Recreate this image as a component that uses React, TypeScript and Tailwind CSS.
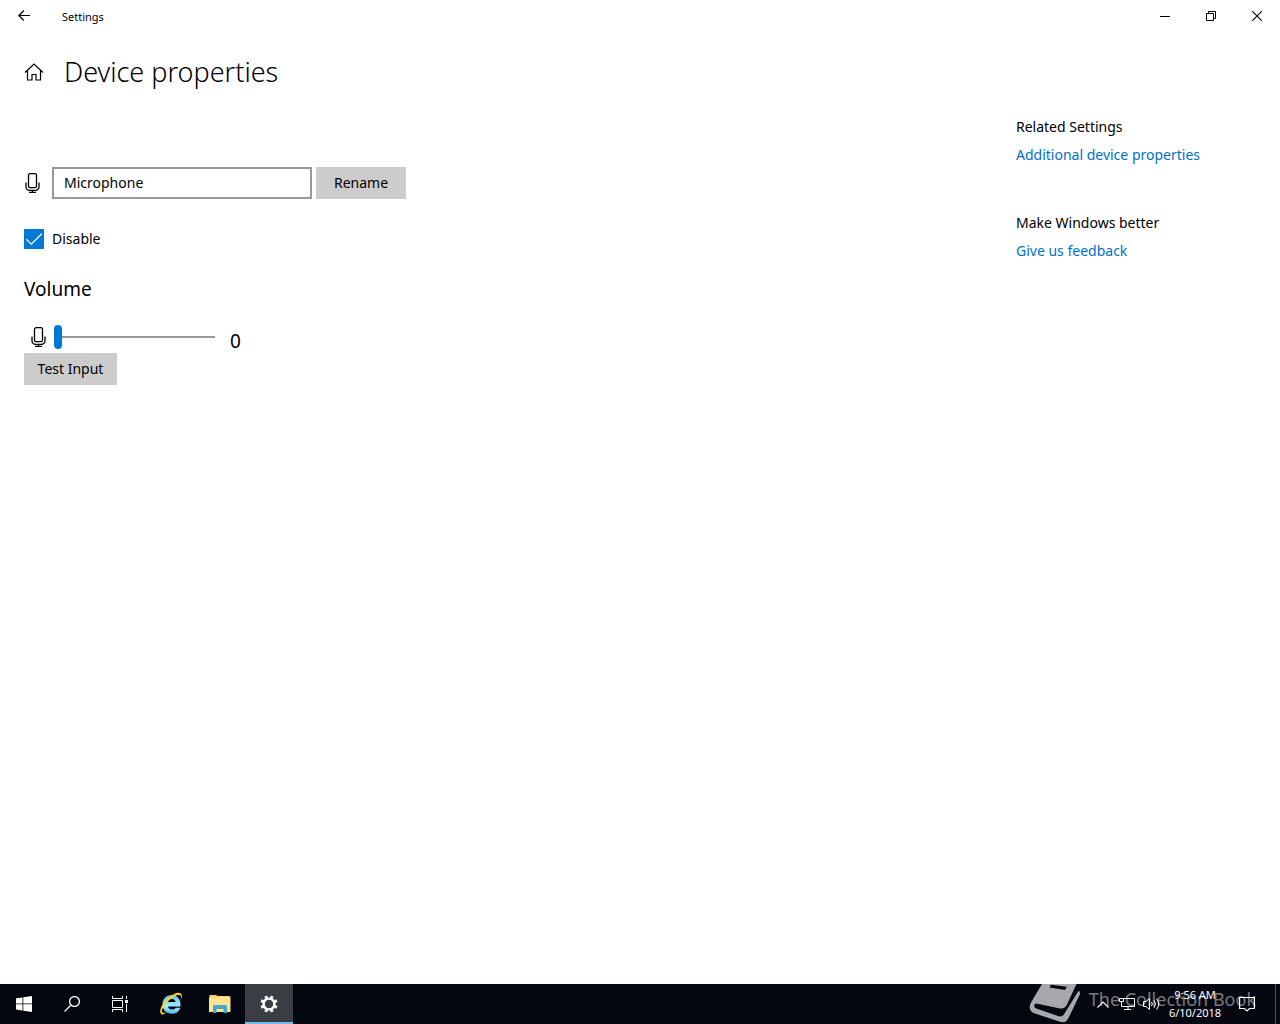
import { useState } from 'react';

function MicIcon() {
  return (
    <svg className="h-5 w-4 shrink-0" viewBox="0 0 16 20" fill="none" stroke="currentColor" strokeWidth="1.3">
      <rect x="4.5" y="0.7" width="8" height="14" rx="1.6" />
      <path d="M2 9.5v4.2a3.6 3.6 0 0 0 3.6 3.6h5.8a3.6 3.6 0 0 0 3.6-3.6V9.5M8.5 17.3v2M5 19.3h7" />
    </svg>
  );
}

function TitleBar() {
  return (
    <header className="flex h-8 items-center text-black">
      <button aria-label="Back" className="flex h-8 w-12 items-center justify-center">
        <svg className="h-3 w-3" viewBox="0 0 12 12" fill="none" stroke="currentColor" strokeWidth="1.2">
          <path d="M12 5.5H.8M5.8.5l-5 5 5 5" />
        </svg>
      </button>
      <span className="ml-3.5 flex-1 pt-0.5 text-[11px]">Settings</span>
      <button aria-label="Minimize" className="flex h-8 w-[46px] items-center justify-center">
        <svg className="h-2.5 w-2.5" viewBox="0 0 10 10" stroke="currentColor">
          <path d="M0 5.5h10" />
        </svg>
      </button>
      <button aria-label="Restore" className="flex h-8 w-[46px] items-center justify-center">
        <svg className="h-2.5 w-2.5" viewBox="0 0 10 10" fill="none" stroke="currentColor">
          <path d="M.5 2.5h7v7h-7zM2.5 2.5v-2h7v7h-2" />
        </svg>
      </button>
      <button aria-label="Close" className="flex h-8 w-[46px] items-center justify-center">
        <svg className="h-2.5 w-2.5" viewBox="0 0 10 10" stroke="currentColor" strokeWidth="1.1">
          <path d="M.2.2l9.6 9.6M9.8.2L.2 9.8" />
        </svg>
      </button>
    </header>
  );
}

function DeviceForm() {
  const [name, setName] = useState('Microphone');
  const [disabled, setDisabled] = useState(true);
  const [volume, setVolume] = useState(0);

  return (
    <section className="flex flex-col items-start pt-[55px]">
      <div className="flex items-center">
        <label htmlFor="device-name" aria-label="Device name" className="mr-3">
          <MicIcon />
        </label>
        <input
          id="device-name"
          type="text"
          value={name}
          onChange={(e) => setName(e.target.value)}
          className="mr-1 h-8 w-[260px] border-2 border-[#999] bg-white px-2.5 pb-0.5 text-sm outline-none"
        />
        <button className="h-8 w-[90px] bg-[#ccc] text-sm">Rename</button>
      </div>

      <label className="mt-[30px] flex items-center gap-2 text-sm">
        <span className="grid h-5 w-5">
          <input
            type="checkbox"
            checked={disabled}
            onChange={(e) => setDisabled(e.target.checked)}
            className="col-start-1 row-start-1 h-5 w-5 appearance-none border-2 border-[#333] checked:border-[#0078d7] checked:bg-[#0078d7]"
          />
          {disabled && (
            <svg
              className="pointer-events-none col-start-1 row-start-1 h-5 w-5"
              viewBox="0 0 20 20"
              fill="none"
              stroke="#fff"
              strokeWidth="1.3"
            >
              <path d="M2.3 10.2l5 5L17.8 4.7" />
            </svg>
          )}
        </span>
        Disable
      </label>

      <h2 className="mt-[26px] text-[19px] leading-7">Volume</h2>

      <div className="mt-5 flex h-[30px] items-start">
        <label htmlFor="volume" aria-label="Volume" className="mr-2 ml-1.5 pt-1">
          <MicIcon />
        </label>
        <input
          id="volume"
          type="range"
          min={0}
          max={100}
          value={volume}
          onChange={(e) => setVolume(Number(e.target.value))}
          className="mt-0.5 h-6 w-[161px] appearance-none bg-transparent [&::-webkit-slider-runnable-track]:h-0.5 [&::-webkit-slider-runnable-track]:bg-[#999] [&::-webkit-slider-thumb]:-mt-[11px] [&::-webkit-slider-thumb]:h-6 [&::-webkit-slider-thumb]:w-2 [&::-webkit-slider-thumb]:appearance-none [&::-webkit-slider-thumb]:rounded-full [&::-webkit-slider-thumb]:bg-[#0078d7]"
        />
        <output htmlFor="volume" className="ml-[15px] pt-1.5 text-[19px] leading-6">
          {volume}
        </output>
      </div>
      <button className="h-8 w-[93px] bg-[#ccc] text-sm">Test Input</button>
    </section>
  );
}

function RelatedLinks() {
  return (
    <aside className="flex w-60 flex-col gap-12 pt-[5px] text-sm leading-5">
      <div className="flex flex-col items-start gap-2">
        <h2>Related Settings</h2>
        <a href="#properties" className="text-[#0070c9]">Additional device properties</a>
      </div>
      <div className="flex flex-col items-start gap-2">
        <h2>Make Windows better</h2>
        <a href="#feedback" className="text-[#0070c9]">Give us feedback</a>
      </div>
    </aside>
  );
}

function Watermark() {
  return (
    <div className="pointer-events-none absolute top-0 right-6 flex h-10 w-[228px] items-start justify-between text-white">
      <svg className="h-10 w-[54px] opacity-65" viewBox="0 0 54 40">
        <path
          fill="#fff"
          fillRule="evenodd"
          d="M14 0H48.500L39 20.500C37.500 23.500 35.500 25 32 24.500L8.500 19.500C6 19.500 5.500 22.500 7.500 24.200L30 32C33 33 35 32 36.500 29.500L49.500 8.500Q52 5 52 10L41 33C39 37.500 36.500 39 32 37.800L7 29.500C1.500 27.500.5 23.500 3 18.500zM23 .8L21.500 3.500 37 6 39 2.800z"
        />
      </svg>
      <span className="pt-[3px] text-[18px] leading-6 opacity-45">The Collection Book</span>
    </div>
  );
}

function Taskbar() {
  return (
    <footer className="relative flex h-10 items-stretch overflow-hidden bg-[#04070f] text-white">
      <Watermark />
      <button aria-label="Start" className="flex w-12 items-center justify-center">
        <svg className="h-4 w-4" viewBox="0 0 16 16" fill="currentColor">
          <path d="M0 2.300L6.500 1.400V7.500H0zM7.300 1.300L16 0v7.500H7.300zM0 8.300h6.500v6.200L0 13.600zM7.300 8.300H16V16l-8.700-1.300z" />
        </svg>
      </button>
      <button aria-label="Search" className="flex w-12 items-center justify-center">
        <svg className="h-4 w-4" viewBox="0 0 16 16" fill="none" stroke="currentColor" strokeWidth="1.3">
          <circle cx="10.5" cy="5.5" r="4.9" />
          <path d="M7 9L.5 15.5" />
        </svg>
      </button>
      <button aria-label="Task view" className="flex w-12 items-center justify-center">
        <svg className="h-4 w-4" viewBox="0 0 16 16" fill="none" stroke="currentColor">
          <path d="M.5 4.500h10v7H.5zM.5 0v2.500h10V0M.5 16v-2.500h10V16M14.500 0v3M14.500 8v8" />
          <path d="M13 4h3v3h-3z" fill="currentColor" stroke="none" />
        </svg>
      </button>
      <button aria-label="Internet Explorer" className="ml-[3px] flex w-12 items-center justify-center">
        <svg className="h-6 w-6" viewBox="0 0 24 24" fill="none">
          <defs>
            <linearGradient id="ie-blue" x1="0" y1="0" x2="0" y2="1">
              <stop offset="0" stopColor="#5cc4f0" />
              <stop offset="0.6" stopColor="#a5ecfd" />
              <stop offset="1" stopColor="#45bdf0" />
            </linearGradient>
          </defs>
          <path
            fill="url(#ie-blue)"
            fillRule="evenodd"
            d="M12.500 3C18 3 21.500 7 21.500 12.200V14.500H9c.2 2 1.800 3 4.200 3 1.900 0 3-.6 3.600-1.700h4.400c-1 3.900-4 6-8.200 6C7.300 21.800 3.500 18 3.500 12.500S7.300 3 12.500 3zM9 10h7.500c-.2-1.900-1.500-2.900-3.700-2.900S9.300 8.200 9 10z"
          />
          <path
            fill="#f9cf2e"
            d="M2.500 22.300C-.5 20 2 13 8 7 13.500 1.800 19.500-.6 22 1.700c1.400 1.300 1.200 3.300.2 5.600.2-2 0-3.300-1-4C19 1.900 13.500 4.500 9 9.300 4 14.600 1.800 19 3.500 20.500c.8.7 2.200.5 4-.3-2 1.800-3.900 2.700-5 2.100z"
          />
        </svg>
      </button>
      <button aria-label="File Explorer" className="ml-px flex w-12 items-center justify-center">
        <svg className="h-[18px] w-[22px]" viewBox="0 0 22 18">
          <path fill="#f3cc6c" d="M.5 0H7l1.500 1H20v4H.5z" />
          <path fill="#fde38f" d="M0 2.500h8.500L10 1.500h11.500V17H0z" />
          <path fill="#43a6d0" d="M4 18v-7l1-1h12l1 1v7h-3.500v-4h-7v4z" />
        </svg>
      </button>
      <button
        aria-label="Settings"
        className="ml-px flex w-12 items-center justify-center border-b-2 border-[#76b9ed] bg-[#3a3e44] pt-0.5"
      >
        <svg className="h-[18px] w-[18px]" viewBox="0 0 18 18" fill="none" stroke="currentColor">
          <circle cx="9" cy="9" r="5.4" strokeWidth="2.4" />
          <path
            strokeWidth="3"
            d="M11.300 3.500l1-2.400M14.500 6.700l2.400-1M14.500 11.300l2.400 1M11.300 14.500l1 2.400M6.700 14.500l-1 2.400M3.500 11.300l-2.400 1M3.500 6.700l-2.400-1M6.700 3.500l-1-2.400"
          />
        </svg>
      </button>

      <div className="relative ml-auto flex items-stretch">
        <button aria-label="Show hidden icons" className="flex w-6 items-center justify-center">
          <svg className="h-[7px] w-3" viewBox="0 0 12 7" fill="none" stroke="currentColor" strokeWidth="1.2">
            <path d="M.5 6.500L6 1l5.500 5.500" />
          </svg>
        </button>
        <button aria-label="Network" className="flex w-6 items-center justify-center">
          <svg className="h-4 w-4" viewBox="0 0 16 16" fill="none" stroke="currentColor">
            <path d="M4.500 2.500h11v8h-13v-4M9 10.500v3M5 13.500h7M.5 2.500h4v3h-4zM2.500 5.500v2" />
          </svg>
        </button>
        <button aria-label="Speakers" className="flex w-6 items-center justify-center">
          <svg className="h-4 w-[17px]" viewBox="0 0 17 16" fill="none" stroke="currentColor">
            <path d="M.5 5.500H3l3.500-3v11l-3.500-3H.5zM8.500 6q1.500 2 0 4M11 4.200q3 3.800 0 7.600M13.500 2.500q4.500 5.500 0 11" />
          </svg>
        </button>
        <button className="flex w-16 flex-col items-center justify-center text-[11px] leading-[18px]">
          <span>9:56 AM</span>
          <span>6/10/2018</span>
        </button>
        <button aria-label="Notifications" className="flex w-10 items-center justify-center">
          <svg className="h-4 w-4" viewBox="0 0 16 16" fill="none" stroke="currentColor" strokeWidth="1.2">
            <path d="M.6 1.500h14.800v11H10.500L8 15l-2.500-2.500H.6z" />
          </svg>
        </button>
        <button aria-label="Show desktop" className="ml-2 w-[5px] border-l border-[#4b4d52]" />
      </div>
    </footer>
  );
}

export default function App() {
  return (
    <div className="flex min-h-screen flex-col bg-white font-['Noto_Sans',sans-serif] text-black">
      <TitleBar />
      <div className="flex h-20 items-center gap-5 pl-6">
        <a href="#home" aria-label="Home">
          <svg className="h-5 w-5" viewBox="0 0 20 20" fill="none" stroke="currentColor" strokeWidth="1.2">
            <path d="M1 10.500l9-8.500 9 8.500M3.500 8.500V18H8v-5.500h4V18h4.500V8.500" />
          </svg>
        </a>
        <h1 className="text-[27px] leading-9 font-light">Device properties</h1>
      </div>
      <main className="flex flex-1 justify-between gap-6 pr-6 pl-6">
        <DeviceForm />
        <RelatedLinks />
      </main>
      <Taskbar />
    </div>
  );
}
